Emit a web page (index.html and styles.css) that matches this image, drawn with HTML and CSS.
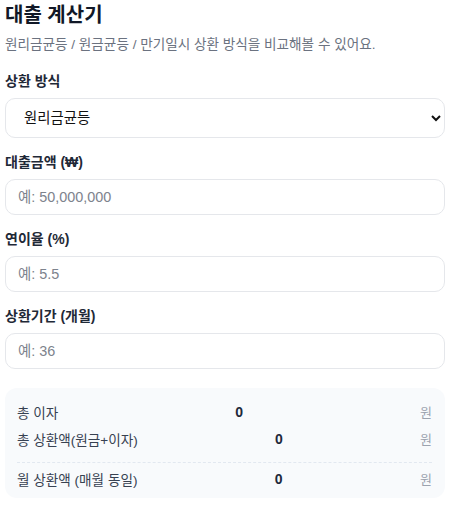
FILE: index.html
```html
<!DOCTYPE html>
<html lang="ko">
<head>
    <meta charset="UTF-8">
    <meta name="viewport" content="width=device-width, initial-scale=1.0">
    <title>대출 계산기</title>
    <link rel="stylesheet" href="styles.css">
</head>
<body>
    <div class="calc">
        <h2 class="title">대출 계산기</h2>
        <p class="desc">원리금균등 / 원금균등 / 만기일시 상환 방식을 비교해볼 수 있어요.</p>

        <div class="form-group">
            <label for="method">상환 방식</label>
            <select id="method">
                <option>원리금균등</option>
                <option>원금균등</option>
                <option>만기일시</option>
            </select>
        </div>
        <div class="form-group">
            <label for="amount">대출금액 (₩)</label>
            <input type="text" id="amount" placeholder="예: 50,000,000">
        </div>
        <div class="form-group">
            <label for="rate">연이율 (%)</label>
            <input type="text" id="rate" placeholder="예: 5.5">
        </div>
        <div class="form-group">
            <label for="months">상환기간 (개월)</label>
            <input type="text" id="months" placeholder="예: 36">
        </div>

        <div class="result">
            <div class="row">
                <span class="name">총 이자</span>
                <span class="value">0</span>
                <span class="unit">원</span>
            </div>
            <div class="row">
                <span class="name">총 상환액(원금+이자)</span>
                <span class="value">0</span>
                <span class="unit">원</span>
            </div>
            <div class="divider"></div>
            <div class="row">
                <span class="name">월 상환액 (매월 동일)</span>
                <span class="value">0</span>
                <span class="unit">원</span>
            </div>
        </div>
    </div>
</body>
</html>
```
FILE: styles.css
```css
/* General */
body {
  font-family: 'Liberation Sans', 'Noto Sans CJK KR', sans-serif;
  margin: 0;
  padding: 0;
  background: #ffffff;
  color: #1f2937;
}

.calc {
  width: 440px;
  margin-left: 5px;
}

/* Heading */
.title {
  font-size: 20px;
  font-weight: bold;
  color: #111827;
  margin: 2px 0 0;
  line-height: 26px;
}

.desc {
  font-size: 13.6px;
  color: #6b7280;
  margin: 7px 0 16px;
  line-height: 20px;
}

/* Form */
.form-group {
  margin-bottom: 14px;
}

label {
  display: block;
  font-size: 14px;
  font-weight: bold;
  color: #1f2937;
  line-height: 20px;
  margin-bottom: 7px;
}

select,
input[type="text"] {
  width: 100%;
  box-sizing: border-box;
  border: 1px solid #e5e7eb;
  border-radius: 10px;
  background-color: #ffffff;
  font-family: inherit;
  outline: none;
}

select {
  height: 40px;
  padding: 0 10px 0 14px;
  font-size: 14.4px;
  color: #111111;
}

input[type="text"] {
  height: 36px;
  padding: 0 12px;
  font-size: 14.4px;
  color: #1f2937;
}

input::placeholder {
  color: #7d838d;
}

/* Result */
.result {
  margin-top: 19px;
  background-color: #f8fafc;
  border-radius: 12px;
  padding: 10px 13px 6px 12px;
}

.row {
  display: flex;
  justify-content: space-between;
  align-items: center;
  height: 27px;
}

.name {
  font-size: 13.6px;
  color: #374151;
}

.value {
  font-size: 14px;
  font-weight: bold;
  color: #1e293b;
}

.unit {
  font-size: 13px;
  color: #9ca3af;
}

.divider {
  border-top: 1px dashed #e2e8f0;
  margin: 10px 0 2px;
}
```
